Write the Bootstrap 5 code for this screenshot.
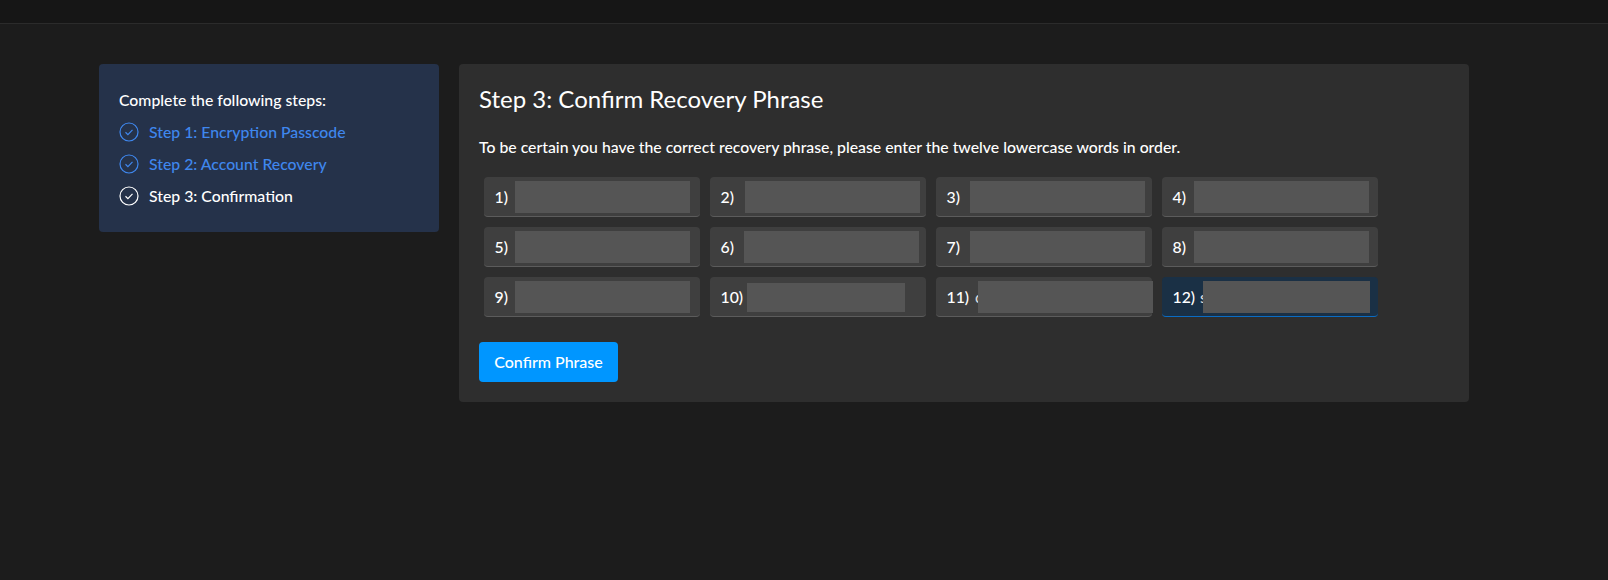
<!DOCTYPE html>
<html lang="en">
<head>
<meta charset="utf-8">
<title>Confirm Recovery Phrase</title>
<link href="https://cdn.jsdelivr.net/npm/bootstrap@5.3.0/dist/css/bootstrap.min.css" rel="stylesheet">
<style>
html,body{height:100%}
body{background:#1c1c1c;color:#fff;font-family:"Lato","Liberation Sans",sans-serif;font-size:15.8px;overflow:hidden;-webkit-font-smoothing:antialiased}
.topstrip{height:24px;background:#161616;border-bottom:1px solid #2b2b2b}
.stage{padding:40px 0 0 99px;gap:20px}
.side-panel{width:340px;height:168px;background:#25324a;border-radius:4px;padding:25px 20px 0}
.side-title{font-weight:500;line-height:22px;margin-bottom:5px}
.step-row{height:32px;gap:10px;font-weight:500}
.step-done{color:#3f87ee}
.step-icon{width:20px;height:20px;flex:none}
.main-panel{width:1010px;height:338px;background:#2e2e2e;border-radius:4px;padding:21px 20px 20px}
.main-title{font-size:24px;font-weight:400;line-height:28px;margin:0 0 23px}
.main-text{font-weight:500;line-height:22px;margin:0 0 19px}
.word-grid{display:grid;grid-template-columns:repeat(4,216px);gap:10px;margin-left:5px;margin-bottom:25px}
.word-cell{height:40px;background:#3f3f3f;border-bottom:1px solid #5c5c5c;border-radius:4px;padding:1px 0 0 11px;font-weight:500}
.word-cell.active{background:#1a3045;border-bottom-color:#0a6cc4}
.word-num{flex:none;margin-left:-0.5px}
.w-20{width:20.5px}.w-21{width:21.5px}.w-23{width:23.5px}.w-24{width:24.5px}.w-26{width:26.5px}.w-28{width:28.5px}.w-27{width:27.5px}
.cover{position:relative;height:32px;width:175px;background:#555;flex:none}
.cover.short{height:29px;width:158px}
.cover.wide12{width:167px}
.peek{width:8px;margin-right:-5px;color:#d8d8d8;flex:none}
.btn-confirm{background:#0096ff;border:0;color:#fff;height:40px;width:139px;padding:0;border-radius:4px;font-size:16px;font-weight:500}
.btn-confirm:hover,.btn-confirm:focus{background:#0096ff;color:#fff}
</style>
</head>
<body>
<div class="topstrip"></div>
<div class="stage d-flex align-items-start">
  <aside class="side-panel">
    <div class="side-title">Complete the following steps:</div>
    <div class="step-row step-done d-flex align-items-center">
      <svg class="step-icon" viewBox="0 0 20 20" fill="none" stroke="currentColor"><circle cx="10" cy="10" r="9" stroke-width="1.2"/><path d="M6.5 10.3l2.4 2.3 4.6-4.8" stroke-width="1.2"/></svg>
      <span>Step 1: Encryption Passcode</span>
    </div>
    <div class="step-row step-done d-flex align-items-center">
      <svg class="step-icon" viewBox="0 0 20 20" fill="none" stroke="currentColor"><circle cx="10" cy="10" r="9" stroke-width="1.2"/><path d="M6.5 10.3l2.4 2.3 4.6-4.8" stroke-width="1.2"/></svg>
      <span>Step 2: Account Recovery</span>
    </div>
    <div class="step-row d-flex align-items-center">
      <svg class="step-icon" viewBox="0 0 20 20" fill="none" stroke="currentColor"><circle cx="10" cy="10" r="9" stroke-width="1.2"/><path d="M6.5 10.3l2.4 2.3 4.6-4.8" stroke-width="1.2"/></svg>
      <span>Step 3: Confirmation</span>
    </div>
  </aside>
  <main class="main-panel">
    <h1 class="main-title">Step 3: Confirm Recovery Phrase</h1>
    <p class="main-text">To be certain you have the correct recovery phrase, please enter the twelve lowercase words in order.</p>
    <div class="word-grid">
      <div class="word-cell d-flex align-items-center"><span class="word-num w-20">1)</span><div class="cover"></div></div>
      <div class="word-cell d-flex align-items-center"><span class="word-num w-24">2)</span><div class="cover"></div></div>
      <div class="word-cell d-flex align-items-center"><span class="word-num w-23">3)</span><div class="cover"></div></div>
      <div class="word-cell d-flex align-items-center"><span class="word-num w-21">4)</span><div class="cover"></div></div>
      <div class="word-cell d-flex align-items-center"><span class="word-num w-20">5)</span><div class="cover"></div></div>
      <div class="word-cell d-flex align-items-center"><span class="word-num w-23">6)</span><div class="cover"></div></div>
      <div class="word-cell d-flex align-items-center"><span class="word-num w-23">7)</span><div class="cover"></div></div>
      <div class="word-cell d-flex align-items-center"><span class="word-num w-21">8)</span><div class="cover"></div></div>
      <div class="word-cell d-flex align-items-center"><span class="word-num w-20">9)</span><div class="cover"></div></div>
      <div class="word-cell d-flex align-items-center"><span class="word-num w-26">10)</span><div class="cover short"></div></div>
      <div class="word-cell d-flex align-items-center"><span class="word-num w-28">11)</span><span class="peek">c</span><div class="cover"></div></div>
      <div class="word-cell active d-flex align-items-center"><span class="word-num w-27">12)</span><span class="peek">s</span><div class="cover wide12"></div></div>
    </div>
    <button type="button" class="btn btn-confirm">Confirm Phrase</button>
  </main>
</div>
</body>
</html>
